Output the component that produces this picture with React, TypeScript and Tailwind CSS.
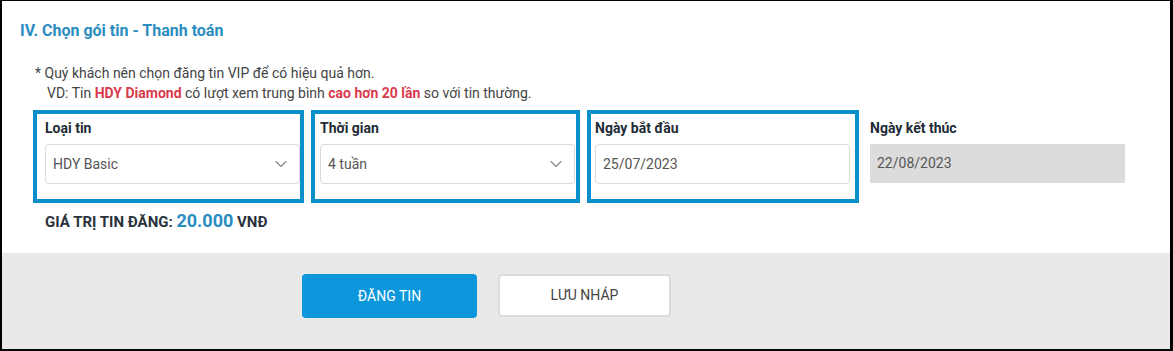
import React from 'react';
import { ChevronDown } from 'lucide-react';

const fields = [
    { label: 'Loại tin', value: 'HDY Basic', kind: 'select', box: 'left-[-12px] right-[-4px]' },
    { label: 'Thời gian', value: '4 tuần', kind: 'select', box: 'left-[-9px] right-[-5px]' },
    { label: 'Ngày bắt đầu', value: '25/07/2023', kind: 'input', box: 'left-[-8px] right-[-9px]' },
    { label: 'Ngày kết thúc', value: '22/08/2023', kind: 'disabled', box: '' },
];

const App = () => {
    return (
        <div
            className="w-[1173px] h-[351px] flex flex-col bg-white border-black border-t border-l-2 border-r-[3px] border-b-2 overflow-hidden"
            style={{ fontFamily: 'Roboto, "Noto Sans", sans-serif' }}
        >
            <section className="flex-1 bg-white">
                <h2 className="pt-[20px] pl-[18px] text-[16px] leading-[20px] font-bold text-[#2b8cbf]">
                    IV. Chọn gói tin - Thanh toán
                </h2>

                <div className="mt-[22px] pl-[33px] text-[14px] leading-[20px] text-[#444]">
                    <p>* Quý khách nên chọn đăng tin VIP để có hiệu quả hơn.</p>
                    <p className="pl-[12px]">
                        VD: Tin <span className="font-bold text-[#d93a4d]">HDY Diamond</span> có lượt xem trung bình{' '}
                        <span className="font-bold text-[#d93a4d]">cao hơn 20 lần</span> so với tin thường.
                    </p>
                </div>

                <div className="mt-[15px] ml-[43px] grid grid-cols-[255px_255px_255px_255px] gap-x-[20px]">
                    {fields.map((f) => (
                        <div key={f.label} className="relative">
                            <p className="text-[14px] leading-[20px] font-bold text-[#222b36] mb-[6px]">{f.label}</p>
                            {f.kind === 'disabled' ? (
                                <div className="h-[39px] flex items-center px-[7px] bg-[#dcdcdc] text-[14px] text-[#555]">
                                    {f.value}
                                </div>
                            ) : (
                                <div className="h-[40px] flex items-center justify-between px-[7px] bg-white border border-[#d9d9d9] rounded-[4px] text-[14px] text-[#555]">
                                    <span>{f.value}</span>
                                    {f.kind === 'select' && (
                                        <ChevronDown size={20} strokeWidth={1.4} className="text-[#8a8a8a] mr-[1px]" />
                                    )}
                                </div>
                            )}
                            {f.box && (
                                <div
                                    className={`absolute top-[-8px] bottom-[-19px] ${f.box} border-4 border-[#0b8fca] pointer-events-none`}
                                />
                            )}
                        </div>
                    ))}
                </div>

                <p className="mt-[27px] pl-[43px] leading-[20px] font-bold text-[#2a323c] text-[15px]">
                    GIÁ TRỊ TIN ĐĂNG: <span className="text-[18px] text-[#2b8cbf]">20.000</span> VNĐ
                </p>
            </section>

            <section className="h-[96px] shrink-0 bg-[#e9e9e9] flex items-start pl-[300px] pt-[21px] gap-x-[21px]">
                <button className="w-[175px] h-[44px] rounded-[4px] bg-[#0c97dc] text-white text-[14px]">
                    ĐĂNG TIN
                </button>
                <button className="w-[173px] h-[43px] rounded-[4px] bg-white border-2 border-[#dcdcdc] text-[#444] text-[14px]">
                    LƯU NHÁP
                </button>
            </section>
        </div>
    );
};

export default App;
